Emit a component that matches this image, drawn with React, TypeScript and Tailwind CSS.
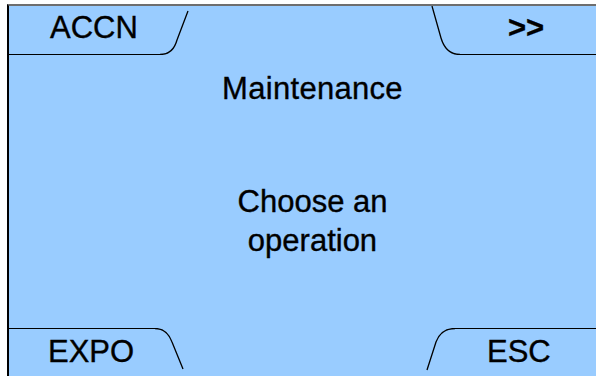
import React from "react";

export default function App() {
  const font = { fontFamily: '"Liberation Sans", Arial, sans-serif' };
  return (
    <div className="w-[596px] h-[376px] bg-white pl-[7px] pt-[4px] overflow-hidden" style={font}>
      <div className="w-full h-full bg-[#99ccff] border-l-2 border-t-2 border-l-black border-t-[#6e6e6e] flex flex-col text-black [-webkit-text-stroke:0.35px_black]">
        {/* top row */}
        <div className="h-[49px] flex shrink-0">
          <div className="w-[151px] shrink-0 h-full border-b border-black pl-[41px] pt-[6px]">
            <div className="text-[31px] leading-[31px]">ACCN</div>
          </div>
          <svg width="30" height="49" className="shrink-0">
            <path d="M0 48.5 Q13 48.5 17 34 L28 5" fill="none" stroke="black" strokeWidth="1.3" />
          </svg>
          <div className="flex-1" />
          <svg width="30" height="49" className="shrink-0">
            <path d="M2 0 L11 32 Q16 48.5 30 48.5" fill="none" stroke="black" strokeWidth="1.3" />
          </svg>
          <div className="w-[136px] shrink-0 h-full border-b border-black pl-[48px] pt-[6px]">
            <div className="text-[31px] leading-[31px] font-bold">&gt;&gt;</div>
          </div>
        </div>
        {/* middle */}
        <div className="flex-1 flex flex-col items-center pl-[20px] pt-[14px]">
          <div className="text-[31px] leading-[39px] tracking-[0.3px]">Maintenance</div>
          <div className="mt-[74px] text-[31px] leading-[39px] text-center">
            <div>Choose an</div>
            <div>operation</div>
          </div>
        </div>
        {/* bottom row */}
        <div className="h-[48px] flex shrink-0">
          <div className="w-[146px] shrink-0 h-full border-t border-black pl-[39px] pt-[7px]">
            <div className="text-[31px] leading-[31px]">EXPO</div>
          </div>
          <svg width="30" height="48" className="shrink-0 -mt-[0.5px]">
            <path d="M0 0.5 Q12 0.5 17 14 L28 41" fill="none" stroke="black" strokeWidth="1.3" />
          </svg>
          <div className="flex-1" />
          <svg width="30" height="48" className="shrink-0 -mt-[0.5px]">
            <path d="M30 0.5 Q16 0.5 11 14 L2 42" fill="none" stroke="black" strokeWidth="1.3" />
          </svg>
          <div className="w-[141px] shrink-0 h-full border-t border-black pl-[32px] pt-[7px]">
            <div className="text-[31px] leading-[31px]">ESC</div>
          </div>
        </div>
      </div>
    </div>
  );
}
